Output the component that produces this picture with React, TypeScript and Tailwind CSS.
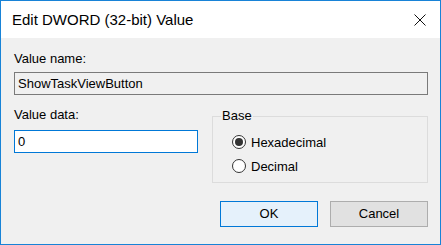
import React from "react";

const font = { fontFamily: '"Liberation Sans", Arial, sans-serif' };

const Radio = ({ checked, label }: { checked?: boolean; label: string }) => (
  <div className="flex items-center h-[24px]">
    <span className="w-[14px] h-[14px] rounded-full border border-[#333333] bg-white flex items-center justify-center">
      {checked && <span className="w-[8px] h-[8px] rounded-full bg-[#333333]" />}
    </span>
    <span className="ml-[5px] text-[13px] leading-[15px] text-black">{label}</span>
  </div>
);

const App: React.FC = () => {
  return (
    <div
      className="w-[441px] h-[245px] border border-[#1883d7] flex flex-col bg-[#f0f0f0]"
      style={font}
    >
      <div className="h-[37px] bg-white flex items-center justify-between pl-[11px] pr-[14px]">
        <span className="text-[15px] text-black pt-[1px]">Edit DWORD (32-bit) Value</span>
        <svg width="12" height="12" viewBox="0 0 12 12" className="mt-[1px]">
          <path d="M0.5 0.5L11.5 11.5M11.5 0.5L0.5 11.5" stroke="#111" strokeWidth="1" />
        </svg>
      </div>

      <div className="flex-1 flex flex-col pl-[13px] pr-[12px] pt-[13px]">
        <div className="text-[13px] leading-[15px] text-black">Value name:</div>
        <div className="mt-[6px] h-[23px] border border-[#7a7a7a] bg-[#f0f0f0] flex items-center px-[3px] text-[13px] text-black">
          ShowTaskViewButton
        </div>

        <div className="flex mt-[12px]">
          <div className="w-[184px] flex flex-col">
            <div className="text-[13px] leading-[15px] text-black">Value data:</div>
            <div className="mt-[8px] h-[23px] border border-[#0078d7] bg-white flex items-center px-[3px] text-[13px] text-black">
              0
            </div>
          </div>

          <div className="relative ml-[14px] flex-1 mt-[9px] h-[67px] border border-[#dcdcdc] pl-[19px] pt-[13px]">
            <span className="absolute -top-[9px] left-[8px] px-[1px] bg-[#f0f0f0] text-[13px] leading-[15px] text-black">
              Base
            </span>
            <Radio checked label="Hexadecimal" />
            <Radio label="Decimal" />
          </div>
        </div>

        <div className="flex justify-end gap-[12px] mt-[18px]">
          <button className="w-[98px] h-[26px] border border-[#0078d7] bg-[#e5f1fb] text-[13px] text-black">
            OK
          </button>
          <button className="w-[98px] h-[26px] border border-[#adadad] bg-[#e1e1e1] text-[13px] text-black">
            Cancel
          </button>
        </div>
      </div>
    </div>
  );
};

export default App;
